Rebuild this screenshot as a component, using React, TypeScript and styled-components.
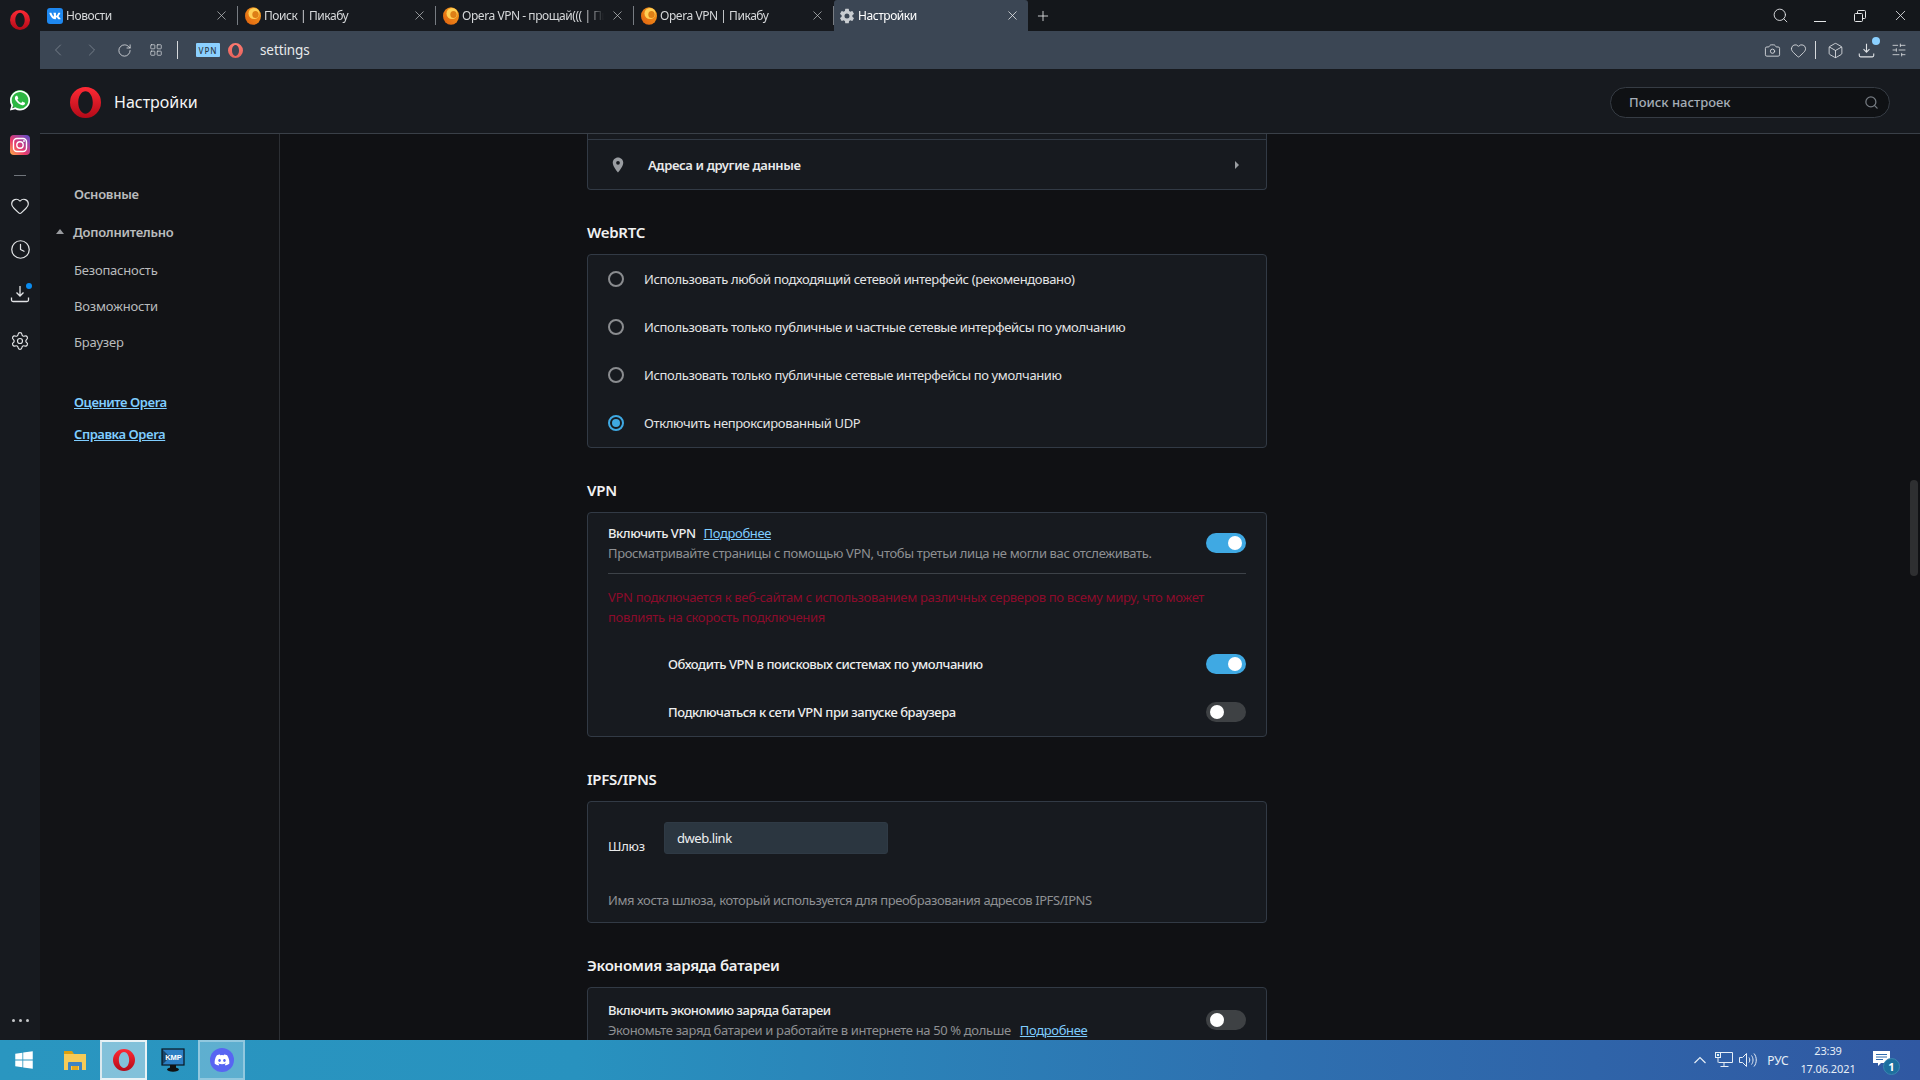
import React from "react";
import styled, { createGlobalStyle } from "styled-components";
import { ChevronLeft, ChevronRight, RotateCw, LayoutGrid, Camera, Heart, Box, SlidersHorizontal, Search, X, Plus, Clock, Settings } from "lucide-react";
import { FaVk, FaWhatsapp, FaDiscord, FaWindows } from "react-icons/fa";
import { IoSettingsSharp } from "react-icons/io5";
import { MdPlace } from "react-icons/md";

const FONT = `"Noto Sans", "Open Sans", sans-serif`;

const Global = createGlobalStyle`
  html, body { margin: 0; padding: 0; background: #101114; overflow: hidden; }
  * { box-sizing: border-box; }
  #root { width: 1920px; height: 1080px; font-family: ${FONT}; font-size: 13px; }
`;

const Screen = styled.div`display:flex;flex-direction:column;width:1920px;height:1080px;overflow:hidden;`;
const Desktop = styled.div`display:flex;height:1040px;overflow:hidden;`;

const Rail = styled.aside`width:40px;flex:none;background:#171a1f;display:flex;flex-direction:column;align-items:center;color:#e2e4e6;`;
const RailItem = styled.div<{ $h: number }>`height:${p => p.$h}px;width:40px;flex:none;display:flex;align-items:center;justify-content:center;`;
const Dash = styled.div`width:12px;height:1px;background:#70757b;`;
const RailDot = styled.span`position:relative;display:flex;`;
const Badge = styled.span<{ $size: number; $color: string; $x: number; $y: number }>`
  position:absolute;width:${p => p.$size}px;height:${p => p.$size}px;border-radius:50%;background:${p => p.$color};right:${p => p.$x}px;top:${p => p.$y}px;`;
const WhatsDisc = styled.span`display:flex;align-items:center;justify-content:center;width:22px;height:22px;border-radius:50%;color:#fff;
  background:radial-gradient(circle,#2db742 0,#2db742 62%,transparent 66%);`;
const Dots = styled.div`display:flex;gap:4px;`;
const DotItem = styled.span`width:3px;height:3px;border-radius:50%;background:#c4c6c9;`;
const RailSpacer = styled.div`flex:1;`;

const Browser = styled.div`flex:1;min-width:0;display:flex;flex-direction:column;`;

const TabStrip = styled.div`height:31px;flex:none;display:flex;background:#14171b;color:#cfd2d5;`;
const Tab = styled.div<{ $w: number; $active?: boolean }>`
  width:${p => p.$w}px;flex:none;display:flex;align-items:center;padding:0 ${p => (p.$active ? 8 : 9)}px 0 ${p => (p.$active ? 5 : 7)}px;position:relative;
  background:${p => (p.$active ? "#3b4654" : "#171a1f")};color:${p => (p.$active ? "#fff" : "#d6d8da")};
  border-radius:${p => (p.$active ? "3px 3px 0 0" : "0")};
  ${p => (p.$active ? "" : "&::after{content:'';position:absolute;right:0;top:6px;height:19px;width:1px;background:#777c82;}")}
`;
const TabIcon = styled.span`width:16px;height:16px;flex:none;display:flex;align-items:center;justify-content:center;margin-right:3px;`;
const VkIcon = styled.span`width:16px;height:16px;border-radius:3px;background:#1e88f0;color:#fff;display:flex;align-items:center;justify-content:center;`;
const TabTitle = styled.span`flex:1;min-width:0;white-space:nowrap;overflow:hidden;font-size:12px;line-height:16px;letter-spacing:-.45px;
  mask-image:linear-gradient(90deg,#000 calc(100% - 18px),transparent 100%);`;
const TabClose = styled.span`display:flex;flex:none;margin-left:6px;color:#c8cacc;`;
const NewTab = styled.span`display:flex;align-items:center;margin-left:7px;color:#e4e6e8;`;

const Toolbar = styled.div`height:38px;flex:none;background:#3b4654;display:flex;align-items:center;color:#d8dbde;`;
const NavBtn = styled.span<{ $w: number; $dim?: boolean }>`width:${p => p.$w}px;flex:none;display:flex;align-items:center;justify-content:center;color:${p => (p.$dim ? "#79828d" : "#dfe2e5")};`;
const ToolSep = styled.span<{ $ml: number }>`width:1px;height:18px;background:#d6d9dc;flex:none;margin-left:${p => p.$ml}px;`;
const VpnBadge = styled.span`width:24px;height:14px;background:#8bd0ff;border-radius:1px;color:#2c3a47;font-size:8px;font-weight:500;letter-spacing:1px;display:flex;align-items:center;justify-content:center;margin-left:18px;flex:none;`;
const Address = styled.span`color:#e8eaec;font-size:13.5px;margin-left:10px;letter-spacing:-.1px;`;
const ToolSpacer = styled.div`flex:1;`;

const PageHeader = styled.header`height:65px;flex:none;background:#171a1f;border-bottom:1px solid #3a4048;display:flex;align-items:center;padding:2px 31px 0 30px;`;
const HeaderTitle = styled.h1`margin:0 0 0 13px;font-size:16px;font-weight:400;color:#f4f5f6;`;
const SearchBox = styled.div`margin-left:auto;width:280px;height:31px;margin-right:-1px;border:1px solid #363c44;border-radius:16px;background:#0f1114;display:flex;align-items:center;justify-content:space-between;padding:0 10px 0 18px;color:#a5adb6;font-size:13px;font-weight:500;`;
const SearchGlyph = styled.span`display:flex;color:#767c83;`;

const PageBody = styled.div`flex:1;min-height:0;display:flex;position:relative;`;
const Nav = styled.nav`width:240px;flex:none;background:#121316;border-right:1px solid #2c2f34;padding-top:41px;color:#b9bbbd;`;
const NavItem = styled.div<{ $h: number; $bold?: boolean }>`height:${p => p.$h}px;display:flex;align-items:center;padding-left:34px;font-size:13px;letter-spacing:${p => (p.$bold ? "-.28px" : "-.2px")};font-weight:${p => (p.$bold ? 600 : 400)};position:relative;`;
const NavExpandable = styled(NavItem)`padding-left:33px;`;
const NavCaret = styled.span`position:absolute;left:16px;top:16px;width:0;height:0;border-left:4px solid transparent;border-right:4px solid transparent;border-bottom:5px solid #9a9ca0;`;
const NavLinks = styled.div`margin-top:26px;`;
const NavLink = styled.a`height:32px;display:flex;align-items:center;padding-left:34px;color:#7fcdff;font-weight:600;font-size:13px;letter-spacing:-.45px;text-decoration:underline;`;

const Main = styled.main`flex:1;min-width:0;background:#101114;padding-left:307px;overflow:hidden;`;
const Column = styled.div`width:680px;letter-spacing:-.36px;`;
const Card = styled.section<{ $cut?: boolean }>`background:#171a1f;border:1px solid #323a45;border-radius:${p => (p.$cut ? "0 0 4px 4px" : "4px")};${p => (p.$cut ? "border-top:none;" : "")}color:#e8e9ea;`;
const CardStub = styled.div`height:6px;border-bottom:1px solid #323a45;`;
const AddressRow = styled.div`height:49px;display:flex;align-items:center;padding:0 27px 0 21px;font-weight:600;font-size:13px;`;
const PinIcon = styled.span`display:flex;color:#9a9da1;margin-right:21px;`;
const RowCaret = styled.span`margin-left:auto;width:0;height:0;border-top:4px solid transparent;border-bottom:4px solid transparent;border-left:4px solid #9a9da1;`;
const SectionTitle = styled.h2`margin:32px 0 12px;font-size:15px;line-height:20px;font-weight:600;color:#f0f1f2;letter-spacing:-.28px;`;
const RadioRow = styled.label`height:48px;display:flex;align-items:center;padding-left:20px;color:#e3e4e5;`;
const RadioMark = styled.span<{ $on?: boolean }>`width:16px;height:16px;border-radius:50%;border:2px solid ${p => (p.$on ? "#3fa9e3" : "#8a8c8f")};margin-right:20px;flex:none;display:flex;align-items:center;justify-content:center;
  &::after{content:'';width:8px;height:8px;border-radius:50%;background:${p => (p.$on ? "#3fa9e3" : "transparent")};}`;
const Inner = styled.div`padding:0 20px;`;
const Toggle = styled.span<{ $on?: boolean }>`width:40px;height:20px;border-radius:10px;flex:none;display:flex;align-items:center;padding:0 4px;justify-content:${p => (p.$on ? "flex-end" : "flex-start")};background:${p => (p.$on ? "#3fa9e3" : "#3e4144")};
  &::after{content:'';width:14px;height:14px;border-radius:50%;background:#fff;}`;
const ToggleRow = styled.div<{ $pt: number; $pb: number; $line?: boolean }>`display:flex;align-items:center;justify-content:space-between;padding:${p => p.$pt}px 0 ${p => p.$pb}px;${p => (p.$line ? "border-bottom:1px solid #3d4248;" : "")}
  ${Toggle}{margin-bottom:2px;}`;
const RowLabel = styled.div`line-height:20px;color:#eceded;font-weight:500;letter-spacing:-.45px;`;
const RowDesc = styled.div`line-height:21px;color:#8e9093;`;
const Link = styled.a<{ $gap: number }>`color:#7fcdff;text-decoration:underline;margin-left:${p => p.$gap}px;font-weight:400;letter-spacing:-.36px;`;
const Warning = styled.div`margin:13px 0 13px;line-height:20px;color:#8c0b2b;letter-spacing:-.32px;`;
const SubRow = styled.div`height:48px;display:flex;align-items:center;justify-content:space-between;padding-left:60px;color:#eceded;font-weight:500;letter-spacing:-.45px;`;
const GatewayRow = styled.div`display:flex;align-items:flex-start;padding-top:20px;`;
const GatewayLabel = styled.span`line-height:20px;margin-top:14px;width:56px;color:#e8e9ea;letter-spacing:-.25px;`;
const GatewayInput = styled.div`width:224px;height:32px;background:#2b3640;border:1px solid #2f3a45;border-radius:3px;padding-left:12px;display:flex;align-items:center;color:#eef0f1;letter-spacing:-.45px;`;
const GatewayHelp = styled.div`margin-top:34px;padding-bottom:12px;line-height:20px;color:#8e9093;letter-spacing:-.4px;`;

const ScrollThumb = styled.div`position:absolute;right:2px;top:346px;width:8px;height:96px;border-radius:4px;background:#2e2f31;`;

const Taskbar = styled.footer`height:40px;flex:none;display:flex;align-items:stretch;color:#e6eef6;background:linear-gradient(90deg,#2a96c0 0%,#2892bf 30%,#2e70b0 66%,#3058a2 100%);`;
const TaskBtn = styled.div<{ $w: number; $pl?: number; $state?: "focus" | "open" }>`width:${p => p.$w}px;flex:none;display:flex;align-items:center;justify-content:center;padding-left:${p => p.$pl ?? 0}px;
  ${p => (p.$state === "focus" ? "background:rgba(255,255,255,.42);border:2px solid #e8f2f6;border-left-color:#dbe9ef;" : "")}
  ${p => (p.$state === "open" ? "background:rgba(255,255,255,.25);border:2px solid rgba(255,255,255,.32);" : "")}`;
const DiscordDisc = styled.span`width:24px;height:24px;border-radius:50%;background:#5865f2;color:#fff;display:flex;align-items:center;justify-content:center;`;
const Tray = styled.div`margin-left:auto;display:flex;padding-right:18px;`;
const TrayItem = styled.div<{ $w: number }>`width:${p => p.$w}px;display:flex;align-items:center;justify-content:center;position:relative;font-size:12px;`;
const Clockface = styled.div`width:64px;text-align:center;font-size:11px;line-height:18px;padding-top:2px;letter-spacing:-.1px;`;
const NoteBadge = styled.span`position:absolute;left:23px;top:18px;width:17px;height:17px;border-radius:50%;background:#1d6f9e;border:1px solid #3b86b2;color:#fff;font-size:11px;font-weight:700;line-height:15px;text-align:center;`;
const NoteWrap = styled.span`display:flex;margin:-3px 0 0 0;`;

const OperaLogo = ({ size, id, muted }: { size: number; id: string; muted?: boolean }) => (
  <svg width={size} height={size} viewBox="0 0 32 32">
    <defs>
      <linearGradient id={id} x1="0" y1="0" x2="0" y2="1">
        <stop offset="0" stopColor={muted ? "#ff7a70" : "#ff2a35"} />
        <stop offset="1" stopColor={muted ? "#e5635c" : "#b30a18"} />
      </linearGradient>
    </defs>
    <path fillRule="evenodd" fill={`url(#${id})`} d="M16 0A16 16 0 1 0 16 32A16 16 0 1 0 16 0ZM16 4.500C20 4.500 23.500 9.500 23.500 16S20 27.500 16 27.500 8.500 22.500 8.500 16 12 4.500 16 4.500Z" />
  </svg>
);

const PikabuIcon = () => (
  <svg width="16" height="18" viewBox="0 0 16 18">
    <defs>
      <linearGradient id="pk" x1="0" y1="1" x2="1" y2="0">
        <stop offset="0" stopColor="#e0600f" />
        <stop offset="1" stopColor="#f7a11f" />
      </linearGradient>
    </defs>
    <ellipse cx="8" cy="9" rx="8" ry="8.800" fill="url(#pk)" />
    <ellipse cx="9" cy="6.500" rx="5.500" ry="5.500" fill="#ffcf55" />
    <ellipse cx="10.500" cy="7.500" rx="3.200" ry="3.600" fill="#dd7f16" />
  </svg>
);

const DownloadIcon = ({ size = 20 }: { size?: number }) => (
  <svg width={size} height={size} viewBox="0 0 20 20" fill="none" stroke="currentColor" strokeWidth="1.300">
    <path d="M10 2v10M6.500 8.500 10 12l3.500-3.500" />
    <path d="M1.500 13.500v2.500a1.500 1.500 0 0 0 1.500 1.500h14a1.500 1.500 0 0 0 1.500-1.500v-2.500" />
  </svg>
);

const InstagramIcon = () => (
  <svg width="20" height="20" viewBox="0 0 20 20">
    <defs>
      <linearGradient id="ig" x1="0" y1="1" x2="1" y2="0">
        <stop offset="0" stopColor="#fdb24a" />
        <stop offset=".4" stopColor="#ea3a6b" />
        <stop offset="1" stopColor="#5b4fd0" />
      </linearGradient>
    </defs>
    <rect width="20" height="20" rx="4" fill="url(#ig)" />
    <rect x="3.500" y="3.500" width="13" height="13" rx="3.500" fill="none" stroke="#fff" strokeWidth="1.400" />
    <circle cx="10" cy="10" r="3.200" fill="none" stroke="#fff" strokeWidth="1.400" />
    <circle cx="14" cy="6" r=".9" fill="#fff" />
  </svg>
);

const FolderIcon = () => (
  <svg width="22" height="20" viewBox="0 0 22 20">
    <path d="M0 1h8l2 3h12v3H0z" fill="#dba10f" />
    <rect y="4" width="22" height="16" fill="#f6cb57" />
    <path d="M4 20v-7a1 1 0 0 1 1-1h12a1 1 0 0 1 1 1v7h-3v-4H7v4z" fill="#3d83c4" />
    <rect x="8" y="16" width="6" height="4" fill="#e5a81d" />
  </svg>
);

const KmpIcon = () => (
  <svg width="24" height="24" viewBox="0 0 24 24">
    <rect x="1" y="1" width="22" height="16" fill="#2c7fc4" stroke="#0b1620" strokeWidth="1.200" />
    <path d="M1 1l8 8-8 8z" fill="#0b1620" opacity=".55" />
    <text x="12.500" y="12" fontSize="7.500" fontFamily="Liberation Sans, sans-serif" fontWeight="700" fill="#fff" textAnchor="middle">KMP</text>
    <rect x="9" y="17" width="6" height="3" fill="#111" />
    <ellipse cx="12" cy="21.500" rx="6" ry="2.200" fill="#111" />
  </svg>
);

const NetworkIcon = () => (
  <svg width="18" height="16" viewBox="0 0 18 16" fill="none" stroke="#e6eef6">
    <path d="M3.500.5h14v10h-14M9 10.500V14M5.500 14.500h8" />
    <rect x=".5" y=".5" width="5" height="5" fill="#2f6bad" />
    <rect x="2" y="2" width="2" height="2" fill="#e6eef6" stroke="none" />
    <path d="M3 5.500v5" />
  </svg>
);

const SpeakerIcon = () => (
  <svg width="18" height="16" viewBox="0 0 18 16" fill="none" stroke="#e6eef6">
    <path d="M.5 5.500h3l4-4v13l-4-4h-3z" />
    <path d="M10 5.500c1 1.500 1 3.500 0 5M12.500 3.500c2 2.500 2 6.500 0 9M15 1.500c3 3.500 3 9.500 0 13" />
  </svg>
);

const ChevronUpIcon = () => (
  <svg width="12" height="8" viewBox="0 0 12 8" fill="none" stroke="#e6eef6" strokeWidth="1.200"><path d="M.5 7 6 1.500 11.500 7" /></svg>
);

const NoteIcon = () => (
  <svg width="17" height="16" viewBox="0 0 17 16">
    <path d="M0 0h17v12H8l-3 3v-3H0z" fill="#fff" />
    <path d="M3 3.500h11M3 6h11M3 8.500h7" stroke="#2f6bad" strokeWidth="1" />
  </svg>
);

const RestoreIcon = () => (
  <svg width="12" height="12" viewBox="0 0 12 12" fill="none" stroke="#e4e6e8">
    <rect x=".5" y="3.500" width="8" height="8" rx="1" />
    <path d="M3.500 3.500v-2a1 1 0 0 1 1-1h6a1 1 0 0 1 1 1v6a1 1 0 0 1-1 1h-2" />
  </svg>
);

const MinimizeIcon = () => (
  <svg width="12" height="12" viewBox="0 0 12 12" stroke="#e4e6e8"><path d="M0 11.500h12" /></svg>
);

const tabs = [
  { title: "Новости", w: 198, icon: <VkIcon><FaVk size={12} /></VkIcon> },
  { title: "Поиск | Пикабу", w: 198, icon: <PikabuIcon /> },
  { title: "Opera VPN - прощай((( | Пикабу", w: 198, icon: <PikabuIcon /> },
  { title: "Opera VPN | Пикабу", w: 200, icon: <PikabuIcon /> },
];

const radios = [
  "Использовать любой подходящий сетевой интерфейс (рекомендовано)",
  "Использовать только публичные и частные сетевые интерфейсы по умолчанию",
  "Использовать только публичные сетевые интерфейсы по умолчанию",
  "Отключить непроксированный UDP",
];

export default function App() {
  return (
    <>
      <Global />
      <Screen>
        <Desktop>
          <Rail>
            <RailItem $h={40}><OperaLogo size={20} id="op-rail" /></RailItem>
            <RailItem $h={40} />
            <RailItem $h={40}><WhatsDisc><FaWhatsapp size={23} /></WhatsDisc></RailItem>
            <RailItem $h={5} />
            <RailItem $h={40}><InstagramIcon /></RailItem>
            <RailItem $h={20}><Dash /></RailItem>
            <RailItem $h={41}><Heart size={20} strokeWidth={1.4} /></RailItem>
            <RailItem $h={47}><Clock size={21} strokeWidth={1.4} /></RailItem>
            <RailItem $h={42}>
              <RailDot>
                <DownloadIcon />
                <Badge $size={6} $color="#0a8cf0" $x={-2} $y={-1} />
              </RailDot>
            </RailItem>
            <RailItem $h={52}><Settings size={20} strokeWidth={1.4} /></RailItem>
            <RailSpacer />
            <RailItem $h={40}><Dots><DotItem /><DotItem /><DotItem /></Dots></RailItem>
          </Rail>
          <Browser>
            <TabStrip>
              {tabs.map(t => (
                <Tab key={t.title} $w={t.w}>
                  <TabIcon>{t.icon}</TabIcon>
                  <TabTitle>{t.title}</TabTitle>
                  <TabClose><X size={15} strokeWidth={1.1} /></TabClose>
                </Tab>
              ))}
              <Tab $w={194} $active>
                <TabIcon><IoSettingsSharp size={16} color="#c9cdd1" /></TabIcon>
                <TabTitle>Настройки</TabTitle>
                <TabClose><X size={15} strokeWidth={1.2} color="#f0f1f2" /></TabClose>
              </Tab>
              <NewTab><Plus size={16} strokeWidth={1.3} /></NewTab>
              <ToolSpacer />
              <NavBtn $w={40}><Search size={17} strokeWidth={1.3} /></NavBtn>
              <NavBtn $w={40}><MinimizeIcon /></NavBtn>
              <NavBtn $w={40}><RestoreIcon /></NavBtn>
              <NavBtn $w={40}><X size={17} strokeWidth={1.2} /></NavBtn>
            </TabStrip>
            <Toolbar>
              <NavBtn $w={36} $dim><ChevronLeft size={20} strokeWidth={1.1} /></NavBtn>
              <NavBtn $w={32} $dim><ChevronRight size={20} strokeWidth={1.1} /></NavBtn>
              <NavBtn $w={32}><RotateCw size={15} strokeWidth={1.3} /></NavBtn>
              <NavBtn $w={32}><LayoutGrid size={14} strokeWidth={1.2} /></NavBtn>
              <ToolSep $ml={5} />
              <VpnBadge>VPN</VpnBadge>
              <NavBtn $w={30}><OperaLogo size={15} id="op-addr" muted /></NavBtn>
              <Address>settings</Address>
              <ToolSpacer />
              <NavBtn $w={26}><Camera size={17} strokeWidth={1.2} /></NavBtn>
              <NavBtn $w={26}><Heart size={17} strokeWidth={1.2} /></NavBtn>
              <ToolSep $ml={4} />
              <NavBtn $w={38}><Box size={17} strokeWidth={1.2} /></NavBtn>
              <NavBtn $w={24}>
                <RailDot>
                  <DownloadIcon size={17} />
                  <Badge $size={8} $color="#8bd0ff" $x={-5} $y={-5} />
                </RailDot>
              </NavBtn>
              <NavBtn $w={42}><SlidersHorizontal size={16} strokeWidth={1.2} /></NavBtn>
            </Toolbar>
            <PageHeader>
              <OperaLogo size={31} id="op-head" />
              <HeaderTitle>Настройки</HeaderTitle>
              <SearchBox>
                Поиск настроек
                <SearchGlyph><Search size={15} strokeWidth={2} /></SearchGlyph>
              </SearchBox>
            </PageHeader>
            <PageBody>
              <Nav>
                <NavItem $h={38} $bold>Основные</NavItem>
                <NavExpandable $h={38} $bold><NavCaret />Дополнительно</NavExpandable>
                <NavItem $h={37}>Безопасность</NavItem>
                <NavItem $h={36}>Возможности</NavItem>
                <NavItem $h={36}>Браузер</NavItem>
                <NavLinks>
                  <NavLink>Оцените Opera</NavLink>
                  <NavLink>Справка Opera</NavLink>
                </NavLinks>
              </Nav>
              <Main>
                <Column>
                  <Card $cut>
                    <CardStub />
                    <AddressRow>
                      <PinIcon><MdPlace size={18} /></PinIcon>
                      Адреса и другие данные
                      <RowCaret />
                    </AddressRow>
                  </Card>

                  <SectionTitle>WebRTC</SectionTitle>
                  <Card>
                    {radios.map((r, i) => (
                      <RadioRow key={r}>
                        <RadioMark $on={i === 3} />
                        {r}
                      </RadioRow>
                    ))}
                  </Card>

                  <SectionTitle>VPN</SectionTitle>
                  <Card>
                    <Inner>
                      <ToggleRow $pt={10} $pb={9} $line>
                        <div>
                          <RowLabel>Включить VPN<Link $gap={8}>Подробнее</Link></RowLabel>
                          <RowDesc>Просматривайте страницы с помощью VPN, чтобы третьи лица не могли вас отслеживать.</RowDesc>
                        </div>
                        <Toggle $on />
                      </ToggleRow>
                      <Warning>VPN подключается к веб-сайтам с использованием различных серверов по всему миру, что может<br />повлиять на скорость подключения</Warning>
                      <SubRow>Обходить VPN в поисковых системах по умолчанию<Toggle $on /></SubRow>
                      <SubRow>Подключаться к сети VPN при запуске браузера<Toggle /></SubRow>
                    </Inner>
                  </Card>

                  <SectionTitle>IPFS/IPNS</SectionTitle>
                  <Card>
                    <Inner>
                      <GatewayRow>
                        <GatewayLabel>Шлюз</GatewayLabel>
                        <GatewayInput>dweb.link</GatewayInput>
                      </GatewayRow>
                      <GatewayHelp>Имя хоста шлюза, который используется для преобразования адресов IPFS/IPNS</GatewayHelp>
                    </Inner>
                  </Card>

                  <SectionTitle>Экономия заряда батареи</SectionTitle>
                  <Card>
                    <Inner>
                      <ToggleRow $pt={12} $pb={9}>
                        <div>
                          <RowLabel>Включить экономию заряда батареи</RowLabel>
                          <RowDesc>Экономьте заряд батареи и работайте в интернете на 50 % дольше<Link $gap={9}>Подробнее</Link></RowDesc>
                        </div>
                        <Toggle />
                      </ToggleRow>
                    </Inner>
                  </Card>
                </Column>
              </Main>
              <ScrollThumb />
            </PageBody>
          </Browser>
        </Desktop>
        <Taskbar>
          <TaskBtn $w={48}><FaWindows size={20} color="#fff" /></TaskBtn>
          <TaskBtn $w={52} $pl={2}><FolderIcon /></TaskBtn>
          <TaskBtn $w={47} $state="focus"><OperaLogo size={22} id="op-task" /></TaskBtn>
          <TaskBtn $w={51}><KmpIcon /></TaskBtn>
          <TaskBtn $w={47} $state="open"><DiscordDisc><FaDiscord size={16} /></DiscordDisc></TaskBtn>
          <Tray>
            <TrayItem $w={24}><ChevronUpIcon /></TrayItem>
            <TrayItem $w={24}><NetworkIcon /></TrayItem>
            <TrayItem $w={24}><SpeakerIcon /></TrayItem>
            <TrayItem $w={36}>РУС</TrayItem>
            <Clockface>23:39<br />17.06.2021</Clockface>
            <TrayItem $w={42}><NoteWrap><NoteIcon /></NoteWrap><NoteBadge>1</NoteBadge></TrayItem>
          </Tray>
        </Taskbar>
      </Screen>
    </>
  );
}
